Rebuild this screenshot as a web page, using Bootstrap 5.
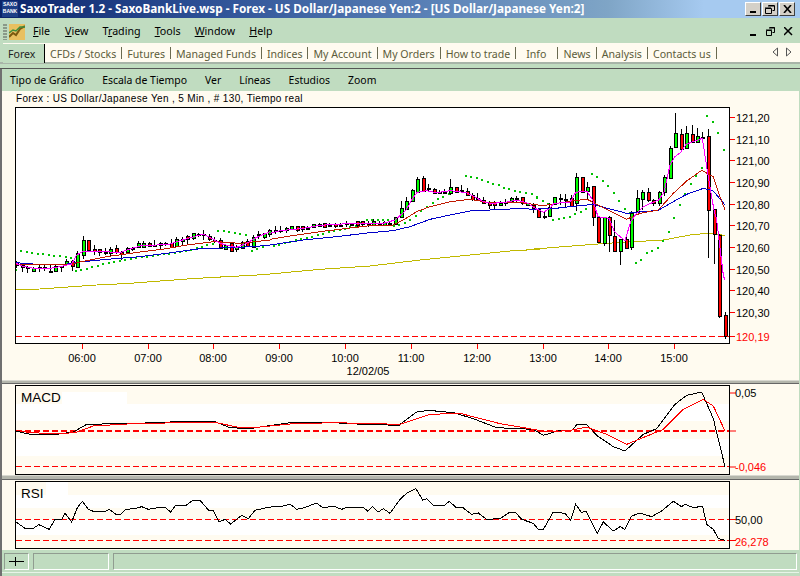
<!DOCTYPE html>
<html lang="en">
<head>
<meta charset="utf-8">
<title>SaxoTrader</title>
<link href="https://cdn.jsdelivr.net/npm/bootstrap@5.3.0/dist/css/bootstrap.min.css" rel="stylesheet">
<style>
html,body{margin:0;width:800px;height:576px;overflow:hidden;background:#c0dcc0}
body{font-family:"Noto Sans","DejaVu Sans",sans-serif;font-size:11px;line-height:1;color:#000}
.win-frame{width:800px;height:576px}
.title-strip{height:18px;background:linear-gradient(90deg,#0a246a 0,#2c4f95 25%,#5c83b8 55%,#7fa5c6 76%,#a6caf0 88%,#a6caf0 100%);color:#fff;font-weight:700;font-size:11.75px;padding-left:2px}
.logo-box{width:16px;height:16px;background:#1d3f86;color:#fff;font:700 5px/7px "Liberation Sans",sans-serif;text-align:center;margin-right:2px;overflow:hidden;flex:none}
.title-text{white-space:nowrap}
.cap-btn{width:16px;height:14px;background:#d4d0c8;border:1px solid;border-color:#fff #404040 #404040 #fff;margin-right:1px;padding:0;display:flex;align-items:center;justify-content:center;border-radius:0}
.menu-strip{height:25px;background:#c0dcc0;font-size:10.7px;padding-top:2px}
.grip-dots{width:4px;height:16px;margin:0 2px 0 3px;background:repeating-linear-gradient(180deg,#8a9a8a 0,#8a9a8a 2px,transparent 2px,transparent 3px)}
.app-ico{width:16px;height:16px;margin-right:8px;flex:none}
.menu-item{color:#000;text-decoration:none}
.menu-item u{text-underline-offset:1px}
.mi-file{margin-right:15px}.mi-view{margin-right:14px}.mi-trading{margin-right:14px}.mi-tools{margin-right:14px}.mi-window{margin-right:14px}
.mdi-ctrls{margin-left:auto;margin-right:7px;gap:9px}
.tab-strip{height:19px;background:#fffbf0;margin-left:3px;flex-wrap:nowrap;position:relative}
.tab-strip .nav-link{padding:0 6px 0 5px;height:19px;line-height:22px;color:#5c5c3a;font-size:10.6px;white-space:nowrap;position:relative;background:transparent;border:0;border-radius:0}
.tab-strip .nav-link.tab-on{background:#c0dcc0;color:#222;margin-top:1px;height:19px;width:42px;border-right:1px solid #000;padding:0 5px;line-height:20px}
.tab-strip .nav-item:not(:first-child) .nav-link::after{content:"";position:absolute;right:0;top:4px;height:12px;width:1px;background:#6a6a50}
.tab-strip .tw-info{padding:0 12px 0 10px}
.tab-arrows{margin-left:auto;margin-right:8px;gap:6px;align-self:center}
.band-sep{height:7px;background:#c0dcc0;border-top:2px solid #a8b4a8;border-bottom:1px solid #555}
.inner-wrap{height:507px;border-left:2px solid #707070;border-right:1px solid #c0dcc0;background:#fffbf0}
.tool-strip{height:22px;background:#c0dcc0;font-size:10.45px;padding-left:8px}
.tool-item{color:#000;margin-right:18px;white-space:nowrap}
.chart-head{height:16px;padding-left:14px;font:10px/15px "Liberation Sans",sans-serif;letter-spacing:.35px;background:#fffbf0}
.pane-svg{display:block;width:797px;background:#fffbf0}
.pane-main{height:273px}
.pane-macd{height:91px}
.pane-rsi{height:70px}
.split-bar{height:4px;background:#b4b6ac;border-top:1px solid #d8d8d0;border-bottom:1px solid #666}
.split-bar2{height:5px}
.pane-label{font:13.5px "Liberation Sans",sans-serif}
.ax{font:11px "Liberation Sans",sans-serif;fill:#000}
.ax-red{fill:#f00}
.stat-strip{height:22px;background:#c0dcc0;padding:3px 2px 2px 2px;gap:4px}
.stat-cell{height:17px;border:1px solid;border-color:#909c90 #fff #fff #909c90;background:#c0dcc0}
.sc-a{width:25px;display:flex;align-items:center;justify-content:center}
.sc-b{width:76px}
.sc-c{flex:1}
.foot-line{flex:1;background:#c0dcc0;border-top:1px solid #e8f4e8}
</style>
</head>
<body>
<div class="win-frame d-flex flex-column">
  <div class="title-strip d-flex align-items-center">
    <div class="logo-box">SAXO<br>BANK</div>
    <span class="title-text">SaxoTrader 1.2 - SaxoBankLive.wsp - Forex - US Dollar/Japanese Yen:2 - [US Dollar/Japanese Yen:2]</span>
    <div class="d-flex ms-auto me-1 align-items-center">
      <button class="cap-btn" aria-label="Minimize"><svg width="8" height="8"><rect x="1" y="6" width="6" height="2"/></svg></button>
      <button class="cap-btn" aria-label="Restore"><svg width="10" height="9"><path d="M3.5.5h6v5h-2M.5 3.5h6v5h-6zM3 1h6M0 3h6" fill="none" stroke="#000"/></svg></button>
      <button class="cap-btn" aria-label="Close"><svg width="9" height="8"><path d="M1 0l7 8M8 0l-7 8" stroke="#000" stroke-width="1.6"/></svg></button>
    </div>
  </div>
  <div class="menu-strip d-flex align-items-center">
    <div class="grip-dots"></div>
    <svg class="app-ico" viewBox="0 0 16 16"><rect width="16" height="16" fill="#e8c060"/><path d="M0 13l4-4 3 2 4-6 5-3" fill="none" stroke="#7a5a10" stroke-width="2"/><path d="M0 9l4-3 3 1 4-4 5 0" fill="none" stroke="#3f8f3f" stroke-width="1.5"/></svg>
    <a class="menu-item mi-file" href="#"><u>F</u>ile</a>
    <a class="menu-item mi-view" href="#"><u>V</u>iew</a>
    <a class="menu-item mi-trading" href="#">T<u>r</u>ading</a>
    <a class="menu-item mi-tools" href="#"><u>T</u>ools</a>
    <a class="menu-item mi-window" href="#"><u>W</u>indow</a>
    <a class="menu-item" href="#"><u>H</u>elp</a>
    <div class="d-flex mdi-ctrls align-items-center">
      <svg width="7" height="9"><rect x="0" y="7" width="6" height="2"/></svg>
      <svg width="9" height="9"><path d="M3.5.5h5v5h-2M.5 3.5h5v5h-5zM3 1h6M0 3h6" fill="none" stroke="#000"/></svg>
      <svg width="9" height="9"><path d="M0 0l8 8M8 0l-8 8" stroke="#000" stroke-width="1.5"/></svg>
    </div>
  </div>
  <ul class="nav tab-strip">
    <li class="nav-item"><a class="nav-link tab-on" href="#">Forex</a></li>
    <li class="nav-item"><a class="nav-link" href="#">CFDs / Stocks</a></li>
    <li class="nav-item"><a class="nav-link" href="#">Futures</a></li>
    <li class="nav-item"><a class="nav-link" href="#">Managed Funds</a></li>
    <li class="nav-item"><a class="nav-link" href="#">Indices</a></li>
    <li class="nav-item"><a class="nav-link" href="#">My Account</a></li>
    <li class="nav-item"><a class="nav-link" href="#">My Orders</a></li>
    <li class="nav-item"><a class="nav-link" href="#">How to trade</a></li>
    <li class="nav-item"><a class="nav-link tw-info" href="#">Info</a></li>
    <li class="nav-item"><a class="nav-link" href="#">News</a></li>
    <li class="nav-item"><a class="nav-link" href="#">Analysis</a></li>
    <li class="nav-item"><a class="nav-link" href="#">Contacts us</a></li>
    <li class="d-flex tab-arrows">
      <svg width="7" height="11"><path d="M5.5 1v8L1 5z" fill="none" stroke="#555"/></svg>
      <svg width="7" height="11"><path d="M1.5 1v8L6 5z" fill="none" stroke="#555"/></svg>
    </li>
  </ul>
  <div class="band-sep"></div>
  <div class="inner-wrap d-flex flex-column">
    <div class="tool-strip d-flex align-items-center">
      <span class="tool-item">Tipo de Gráfico</span>
      <span class="tool-item">Escala de Tiempo</span>
      <span class="tool-item">Ver</span>
      <span class="tool-item">Líneas</span>
      <span class="tool-item">Estudios</span>
      <span class="tool-item">Zoom</span>
    </div>
    <div class="chart-head">Forex : US Dollar/Japanese Yen , 5 Min , # 130, Tiempo real</div>
    <svg id="mainP" class="pane-svg pane-main" viewBox="2 107 797 273">
      <rect x="15.5" y="107.5" width="714" height="236" fill="#fff"/>
      <g id="mainG"></g>
      <rect x="15.5" y="107.5" width="714" height="236" fill="none" stroke="#000"/>
      <g id="mainAx"></g>
      <text class="ax" x="368" y="375" text-anchor="middle">12/02/05</text>
    </svg>
    <div class="split-bar"></div>
    <svg id="macdP" class="pane-svg pane-macd" viewBox="2 384 797 91">
      <path d="M16 404h713v17H16zM16 439h713v17H16zM62 392h65v12H62z" fill="#fff"/>
      <g id="macdG"></g>
      <rect x="15.5" y="385.5" width="714" height="89" fill="none" stroke="#000"/>
      <path d="M730 393h6M730 431h6M730 467h6" stroke="#f00"/>
      <text class="pane-label" x="21" y="402">MACD</text>
      <text class="ax" x="735" y="397">0,05</text>
      <text class="ax ax-red" x="735" y="471">-0,046</text>
    </svg>
    <div class="split-bar split-bar2"></div>
    <svg id="rsiP" class="pane-svg pane-rsi" viewBox="2 480 797 70">
      <path d="M16 495h713v13H16zM16 520h713v15H16zM46 482h22v13H46z" fill="#fff"/>
      <g id="rsiG"></g>
      <rect x="15.5" y="481.5" width="714" height="67" fill="none" stroke="#000"/>
      <path d="M730 519.5h6M730 540.5h6" stroke="#f00"/>
      <text class="pane-label" x="21" y="498">RSI</text>
      <text class="ax" x="735" y="524">50,00</text>
      <text class="ax ax-red" x="735" y="546">26,278</text>
    </svg>
    <div class="stat-strip d-flex">
      <div class="stat-cell sc-a"><svg width="15" height="9"><path d="M0 4.5h15M6.5 0v9" stroke="#000"/></svg></div>
      <div class="stat-cell sc-b"></div>
      <div class="stat-cell sc-c"></div>
    </div>
    <div class="foot-line"></div>
  </div>
</div>
<script>
var NS='http://www.w3.org/2000/svg';
function el(p,n,a){var e=document.createElementNS(NS,n);for(var k in a)e.setAttribute(k,a[k]);e.setAttribute('shape-rendering','crispEdges');p.appendChild(e);return e;}
function line(p,col,ox,oy,pts,w){el(p,'polyline',{points:pts.map(function(q){return (ox+q[0]/3)+','+(oy+q[1]/3)}).join(' '),fill:'none',stroke:col,'stroke-width':w||1});}
function dash(p,x1,x2,y,w,d){el(p,'line',{x1:x1,x2:x2,y1:y,y2:y,stroke:'#f00','stroke-width':w||1,'stroke-dasharray':d||'6 3'});}
var g=document.getElementById('mainG');
function segs(col,w,s3,s4,s5){line(g,col,0,160,s3,w);line(g,col,270,160,s4,w);line(g,col,530,105,s5,w);}
line(g,'#c0b800',0,160,[[48,388],[120,387],[190,382],[290,375],[390,370],[480,363],[590,355],[680,350],[810,343]]);
line(g,'#c0b800',270,160,[[0,342],[150,328],[300,318],[450,300],[600,285],[730,272],[810,268]]);
line(g,'#c0b800',530,105,[[0,433],[100,425],[230,415],[400,405],[480,390],[530,385],[585,391]]);
var dots=[[0,160,[[48,330],[64,272],[80,275],[97,278],[114,282],[130,282],[147,285],[163,287],[180,288],[197,292],[213,295],[228,332],[244,330],[261,326],[277,321],[294,318],[310,313],[327,309],[343,305],[360,302],[376,300],[393,296],[409,295],[425,291],[442,291],[458,288],[475,285],[491,282],[508,281],[524,278],[540,276],[557,274],[574,271],[590,264],[606,260],[622,255],[639,252],[655,212],[672,212],[688,215],[705,218],[721,221],[738,225],[755,272],[772,268],[788,262]]],
[270,160,[[12,257],[27,254],[44,248],[60,245],[77,240],[93,236],[110,233],[126,230],[143,224],[159,221],[176,215],[192,212],[209,210],[225,207],[241,202],[257,197],[274,190],[290,180],[307,180],[323,180],[339,181],[355,181],[371,197],[388,195],[404,188],[421,180],[437,168],[454,152],[471,141],[488,128],[504,118],[520,112],[537,103],[587,47],[603,50],[620,54],[637,59],[654,66],[670,71],[686,76],[702,84],[718,88],[734,93],[751,96],[767,98],[785,103],[801,112]]],
[530,105,[[22,278],[38,288],[54,296],[69,345],[86,342],[102,339],[120,335],[136,328],[152,320],[168,313],[186,207],[201,215],[218,228],[235,242],[252,263],[268,288],[284,312],[300,325],[318,473],[333,464],[350,445],[366,437],[383,428],[398,408],[416,380],[432,338],[449,299],[465,267],[482,236],[498,212],[516,188],[530,33],[548,50],[564,83],[581,134]]]];
dots.forEach(function(s){s[2].forEach(function(d){el(g,'rect',{x:Math.round(s[0]+d[0]/3)-1,y:Math.round(s[1]+d[1]/3)-1,width:2,height:2,fill:'#00c000'});});});
var bars=[[0,160,[[48,305,315,302,325,'r'],[66,315,322,312,335,'r'],[82,322,322,318,338,'d'],[98,324,332,320,335,'g'],[116,321,321,315,335,'d'],[132,322,322,316,332,'d'],[150,332,332,315,335,'d'],[165,318,334,314,335,'g'],[182,318,318,318,335,'d'],[198,302,312,297,314,'g'],[215,304,318,300,332,'r'],[230,280,320,273,322,'g'],[248,241,285,228,296,'g'],[264,241,270,240,270,'r'],[281,268,273,255,285,'r'],[297,268,276,266,288,'r'],[314,275,275,265,285,'d'],[330,266,278,262,290,'g'],[347,263,277,255,282,'r'],[363,277,282,272,300,'r'],[380,263,276,262,280,'g'],[396,265,265,262,272,'d'],[413,250,262,243,264,'g'],[429,248,260,243,262,'g'],[446,248,258,246,260,'r'],[462,255,255,240,262,'d'],[479,248,256,246,268,'g'],[495,248,248,246,258,'d'],[512,248,260,238,265,'r'],[528,236,258,232,258,'g'],[545,236,243,232,256,'g'],[561,229,236,226,256,'r'],[578,220,235,218,240,'g'],[594,221,221,218,232,'d'],[610,222,222,211,240,'d'],[627,227,236,222,244,'r'],[643,240,240,230,250,'d'],[660,240,265,235,266,'r'],[676,256,266,252,270,'g'],[692,250,272,246,274,'r'],[709,260,268,256,275,'g'],[726,245,264,243,268,'g'],[742,243,258,238,262,'r'],[759,230,262,226,262,'g'],[775,222,222,214,236,'d'],[792,220,230,218,236,'g'],[808,210,222,206,230,'g']]],
[270,160,[[15,210,210,198,222,'d'],[30,210,210,198,218,'d'],[47,203,210,200,218,'g'],[63,198,208,198,210,'g'],[80,199,210,198,216,'r'],[96,199,208,198,215,'r'],[112,203,203,198,208,'d'],[129,193,200,192,202,'g'],[146,191,198,190,200,'g'],[162,190,200,189,201,'r'],[178,196,196,190,202,'d'],[195,191,198,188,205,'r'],[211,195,195,190,200,'d'],[227,190,190,183,200,'d'],[243,192,192,188,198,'d'],[260,184,195,182,200,'r'],[277,184,192,182,198,'r'],[293,192,192,184,200,'d'],[310,184,196,178,198,'g'],[326,188,188,184,195,'d'],[342,186,194,184,196,'g'],[358,190,190,186,196,'d'],[375,172,192,170,195,'g'],[392,145,172,122,175,'g'],[408,124,146,112,148,'g'],[425,90,122,88,125,'g'],[441,58,95,50,97,'g'],[458,55,92,48,94,'r'],[474,84,84,72,92,'d'],[491,86,100,84,102,'r'],[507,97,97,90,100,'d'],[523,97,97,88,102,'d'],[540,80,100,58,104,'g'],[557,82,96,80,98,'r'],[573,90,90,76,98,'d'],[590,92,106,85,108,'r'],[606,106,118,98,124,'r'],[622,115,115,100,118,'d'],[639,120,130,112,132,'r'],[656,128,136,124,146,'r'],[672,130,136,124,146,'r'],[689,130,136,124,138,'g'],[705,126,126,118,138,'d'],[722,113,122,110,130,'g'],[738,113,118,108,130,'g'],[755,112,130,110,134,'r'],[771,130,136,128,138,'g'],[788,136,146,134,160,'r']]],
[530,105,[[8,300,310,295,312,'r'],[24,312,335,310,337,'r'],[41,332,332,322,342,'d'],[57,305,332,295,335,'g'],[72,277,298,275,300,'g'],[89,280,280,268,300,'d'],[104,282,282,268,310,'d'],[122,280,302,270,304,'r'],[137,217,295,205,318,'g'],[155,217,262,215,262,'r'],[170,247,257,230,282,'g'],[188,243,335,243,362,'r'],[204,335,410,335,412,'r'],[222,335,415,335,422,'g'],[237,335,390,333,440,'r'],[253,393,437,345,440,'r'],[270,403,437,403,480,'g'],[287,403,428,395,430,'r'],[302,325,425,318,435,'g'],[320,280,317,255,320,'g'],[336,262,282,255,315,'g'],[353,262,285,250,290,'r'],[369,285,293,283,302,'r'],[386,262,293,258,303,'g'],[402,217,262,210,272,'g'],[420,130,218,122,220,'g'],[435,85,125,25,127,'g'],[452,88,133,72,135,'r'],[468,85,130,62,132,'g'],[485,88,112,60,114,'r'],[501,93,110,68,112,'g'],[517,95,95,80,112,'d'],[534,93,315,72,458,'r'],[551,313,386,313,476,'r'],[567,390,633,388,640,'r'],[584,630,693,620,702,'r']]]];
bars.forEach(function(s){s[2].forEach(function(b){
  var X=Math.round(s[0]+b[0]/3),t=Math.round(s[1]+b[1]/3),u=Math.round(s[1]+b[2]/3),h=Math.round(s[1]+b[3]/3),l=Math.round(s[1]+b[4]/3);
  el(g,'line',{x1:X+.5,x2:X+.5,y1:h,y2:l,stroke:'#000'});
  if(b[5]=='d'){el(g,'rect',{x:X-1,y:t,width:4,height:2,fill:'#000'});}
  else{el(g,'rect',{x:X-1+.5,y:t+.5,width:3,height:u-t,fill:b[5]=='g'?'#0f0':'#f00',stroke:'#000'});}
});});
segs('#0000c8',1,[[48,308],[100,312],[190,314],[240,306],[320,298],[420,290],[500,280],[600,266],[720,262],[810,256]],[[0,255],[100,240],[200,230],[300,218],[370,212],[420,200],[480,178],[540,165],[600,153],[700,148],[760,145],[804,150]],[[24,311],[60,312],[120,305],[190,298],[240,312],[290,325],[340,320],[385,316],[430,290],[470,268],[520,250],[550,258],[585,300]]);
segs('#c01800',1,[[48,312],[100,313],[140,313],[215,312],[240,306],[320,290],[420,276],[500,266],[560,255],[640,245],[720,250],[810,240]],[[0,238],[60,228],[150,215],[240,204],[300,197],[370,195],[400,180],[440,155],[480,140],[540,125],[600,118],[660,128],[720,126],[770,130],[804,135]],[[24,300],[50,300],[100,292],[130,288],[170,282],[200,298],[240,318],[290,343],[330,325],[385,315],[430,265],[470,228],[515,196],[550,215],[570,275],[585,315]]);
segs('#ff00ff',1,[[48,310],[66,318],[100,325],[150,325],[180,320],[215,312],[230,285],[248,275],[300,274],[360,278],[380,270],[420,258],[470,255],[510,252],[560,236],[610,222],[640,238],[660,250],[690,258],[710,262],[740,250],[770,232],[810,215]],[[0,220],[30,212],[100,205],[150,196],[200,193],[250,190],[340,190],[375,180],[392,165],[408,150],[425,120],[441,97],[470,92],[500,98],[540,92],[590,98],[610,108],[640,125],[660,130],[700,128],[740,120],[770,128],[804,150]],[[24,313],[40,322],[57,312],[72,295],[120,292],[137,262],[170,258],[188,285],[204,335],[237,340],[253,380],[285,407],[302,350],[320,325],[340,305],[369,292],[386,285],[402,262],[420,180],[435,155],[452,142],[468,118],[517,100],[534,210],[551,310],[560,345],[570,430],[580,510],[584,525]]);
dash(g,16,729,336.5,1,'6 3');
var ax=document.getElementById('mainAx');
function t(s,x,y,c,anc){var e=document.createElementNS(NS,'text');e.setAttribute('x',x);e.setAttribute('y',y);e.setAttribute('class',c);if(anc)e.setAttribute('text-anchor',anc);e.textContent=s;ax.appendChild(e);}
['121,20','121,10','121,00','120,90','120,80','120,70','120,60','120,50','120,40','120,30'].forEach(function(s,i){var y=Math.round(117+i*21.67)+.5;el(ax,'line',{x1:730,x2:735,y1:y,y2:y,stroke:'#f00'});t(s,736,y+4,'ax');});
el(ax,'line',{x1:730,x2:735,y1:336.5,y2:336.5,stroke:'#f00'});t('120,19',736,341,'ax ax-red');
[['06:00',82],['07:00',148],['08:00',213],['09:00',279],['10:00',345],['11:00',411],['12:00',477],['13:00',543],['14:00',608],['15:00',674]].forEach(function(a){el(ax,'line',{x1:a[1]+.5,x2:a[1]+.5,y1:344,y2:349,stroke:'#f00'});t(a[0],a[1],362,'ax','middle');});
var m=document.getElementById('macdG');
dash(m,16,729,431,2,'6 3');dash(m,16,729,466.5,1,'6 3');
line(m,'#000',0,376,[[47,165],[90,175],[170,175],[220,168],[260,145],[400,142],[470,140],[570,135],[640,135],[690,155],[750,158],[800,150],[870,140],[1000,140],[1090,145],[1200,148]]);
line(m,'#000',400,376,[[0,145],[50,108],[85,103],[160,110],[220,128],[290,155],[400,160],[430,178],[480,163],[515,163],[530,147],[560,145],[590,178],[640,212],[675,225],[730,175],[770,158],[825,85],[860,58],[905,48],[940,128],[975,272]]);
line(m,'#f00',0,376,[[47,163],[90,170],[170,173],[225,170],[280,150],[400,143],[640,138],[720,155],[760,155],[870,144],[1000,140],[1200,145]]);
line(m,'#f00',400,376,[[0,145],[90,115],[180,112],[300,143],[400,160],[440,168],[510,163],[560,153],[620,175],[680,205],[790,160],[850,100],[910,70],[940,90],[975,165]]);
var r=document.getElementById('rsiG');
dash(r,16,729,519.5,1,'6 3');dash(r,16,729,540.5,1,'6 3');
line(r,'#000',0,376,[[47,437],[75,457],[100,457],[116,446],[148,460],[165,430],[185,430],[195,412],[215,438],[232,395],[247,376],[265,400],[280,406],[315,406],[328,400],[348,415],[362,415],[378,400],[405,398],[425,392],[445,400],[480,394],[495,394],[512,408],[528,387],[560,387],[578,373],[600,373],[625,402],[640,403],[657,438],[675,430],[692,444],[725,418],[745,428],[765,403],[800,395],[830,390],[850,390],[870,384],[890,400],[910,396],[950,381],[970,396],[1000,390],[1025,400],[1040,394],[1090,394],[1103,405],[1118,392],[1135,408],[1150,398],[1170,412],[1200,370]]);
line(r,'#000',400,376,[[0,370],[20,352],[48,338],[68,372],[80,368],[100,388],[133,388],[148,376],[168,394],[190,396],[215,415],[235,411],[260,430],[300,428],[330,408],[345,408],[365,430],[400,442],[415,460],[430,460],[460,408],[495,412],[512,433],[527,385],[545,410],[558,405],[592,472],[610,438],[640,465],[660,452],[675,460],[695,420],[720,411],[755,422],[785,405],[820,376],[845,392],[855,385],[878,394],[908,392],[920,445],[940,460],[955,488],[975,493]]);
</script>
</body>
</html>
